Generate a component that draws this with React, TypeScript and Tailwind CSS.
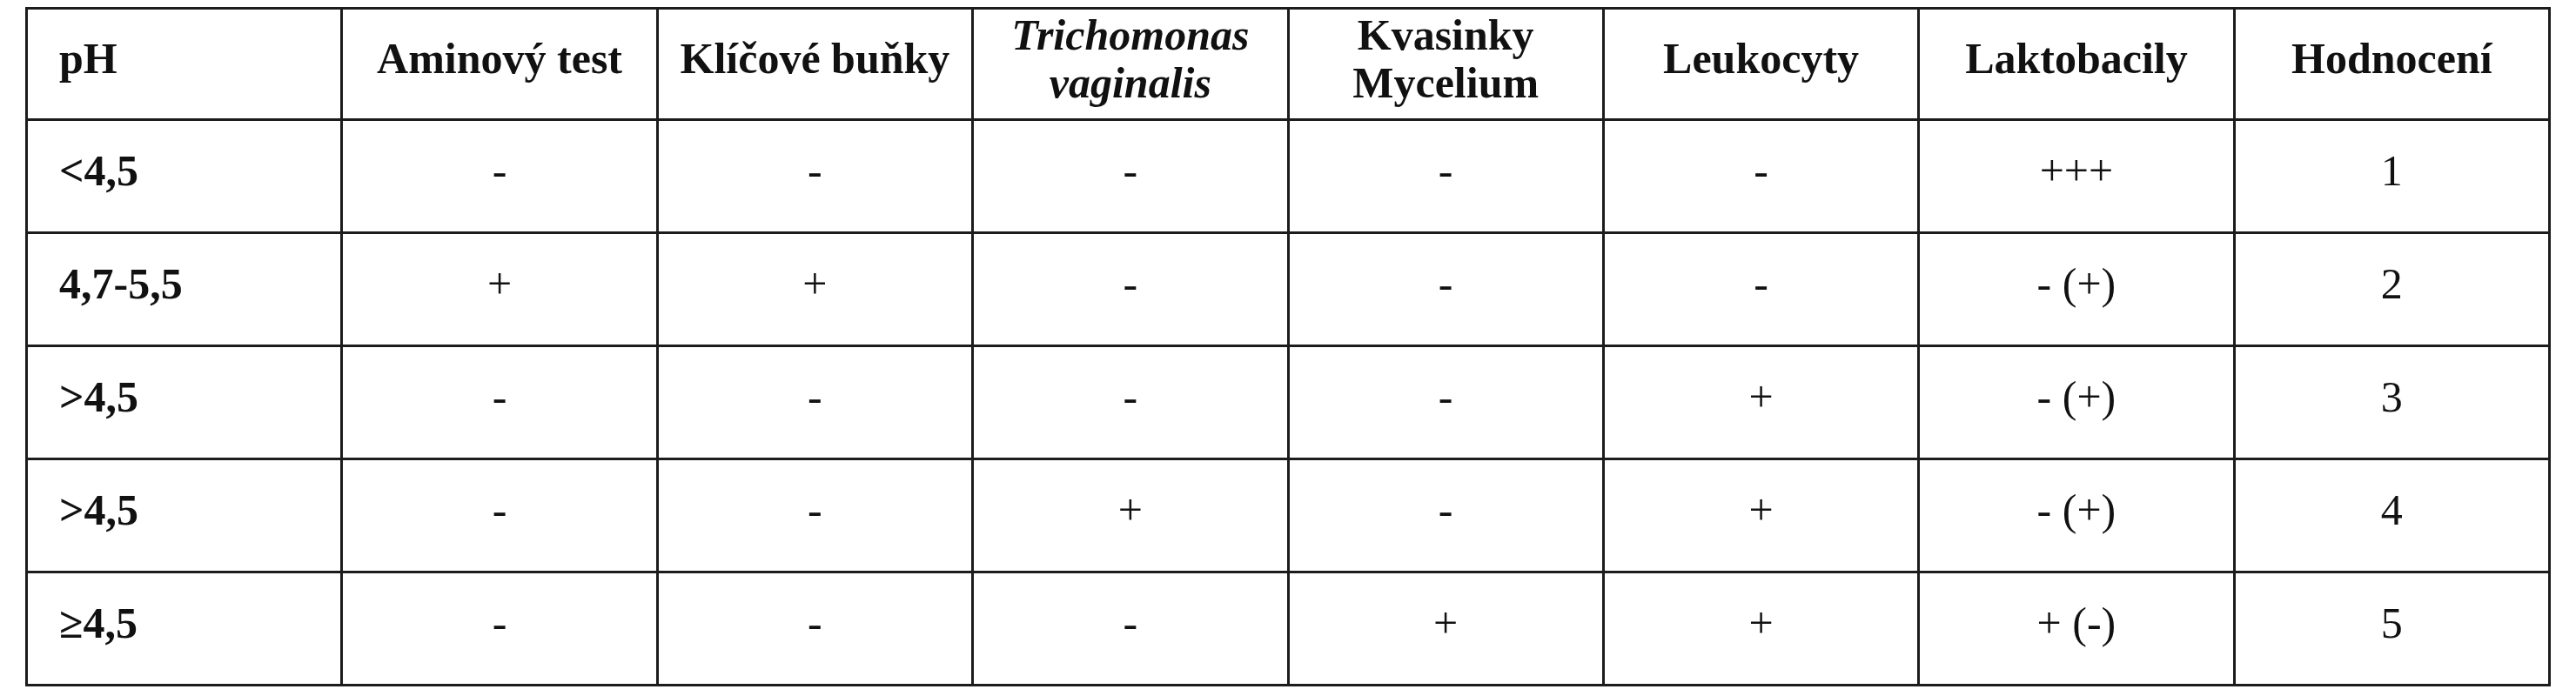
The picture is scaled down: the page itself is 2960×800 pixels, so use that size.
const headers: { label: React.ReactNode; left?: boolean }[] = [
  { label: 'pH', left: true },
  { label: 'Aminový test' },
  { label: 'Klíčové buňky' },
  {
    label: (
      <span className="italic">
        Trichomonas
        <br />
        vaginalis
      </span>
    ),
  },
  {
    label: (
      <>
        Kvasinky
        <br />
        Mycelium
      </>
    ),
  },
  { label: 'Leukocyty' },
  { label: 'Laktobacily' },
  { label: 'Hodnocení' },
];

const rows: string[][] = [
  ['<4,5', '-', '-', '-', '-', '-', '+++', '1'],
  ['4,7-5,5', '+', '+', '-', '-', '-', '- (+)', '2'],
  ['>4,5', '-', '-', '-', '-', '+', '- (+)', '3'],
  ['>4,5', '-', '-', '+', '-', '+', '- (+)', '4'],
  ['≥4,5', '-', '-', '-', '+', '+', '+ (-)', '5'],
];

export default function App() {
  return (
    <div className="min-h-screen bg-white pt-[8px] pl-[29px] font-['Liberation_Serif','Times_New_Roman',serif] text-[50px] leading-[55px] text-[#111]">
      <table className="w-[2902px] table-fixed border-separate border-spacing-0 border-t-[3px] border-l-[3px] border-[#1c1c1c]">
        <thead>
          <tr>
            {headers.map((h, i) => (
              <th
                key={i}
                className={`h-[128px] border-r-[3px] border-b-[3px] border-[#1c1c1c] pb-[12px] align-middle font-bold ${
                  h.left ? 'pl-[36px] text-left' : 'text-center'
                }`}
              >
                {h.label}
              </th>
            ))}
          </tr>
        </thead>
        <tbody>
          {rows.map((row, r) => (
            <tr key={r}>
              {row.map((cell, c) => (
                <td
                  key={c}
                  className={`h-[130px] border-r-[3px] border-b-[3px] border-[#1c1c1c] pb-[12px] align-middle whitespace-pre ${
                    c === 0 ? 'pl-[36px] text-left font-bold' : 'text-center font-normal'
                  }`}
                >
                  {cell}
                </td>
              ))}
            </tr>
          ))}
        </tbody>
      </table>
    </div>
  );
}
